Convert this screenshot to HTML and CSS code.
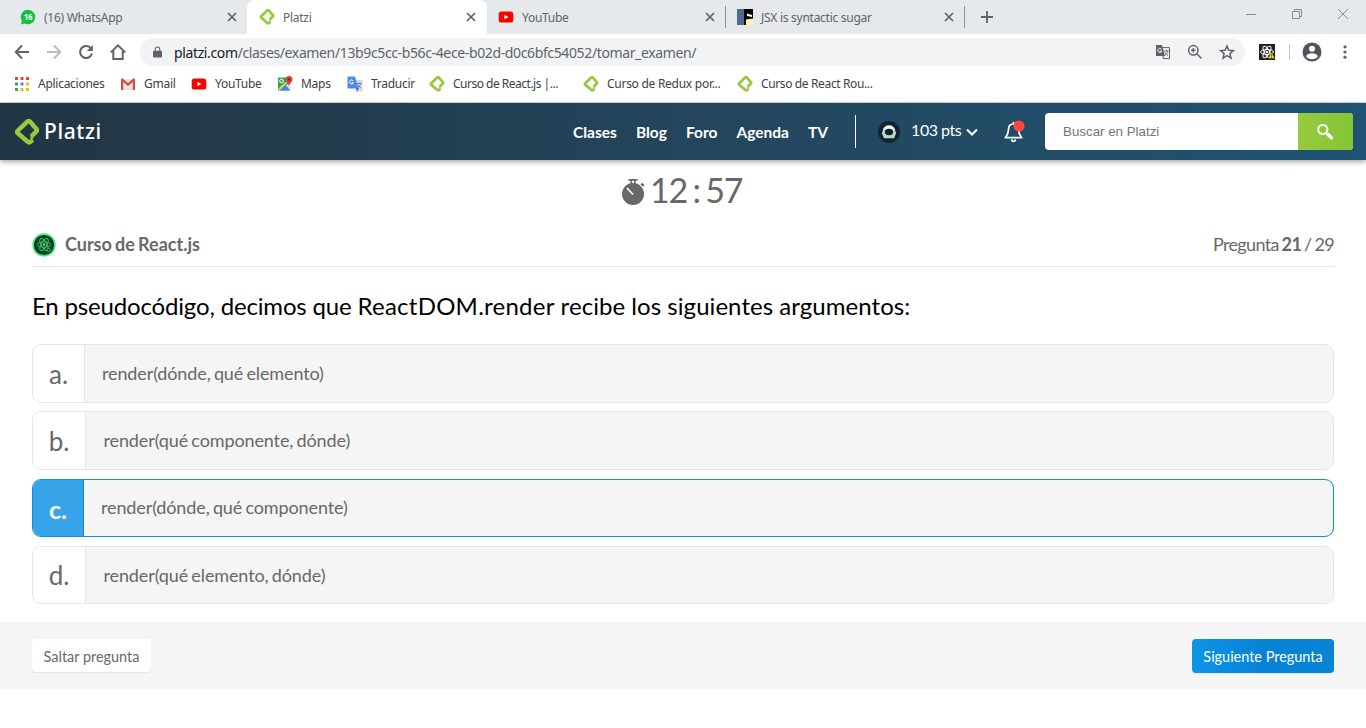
FILE: index.html
```html
<!DOCTYPE html>
<html lang="es">
<head>
<meta charset="utf-8">
<title>Platzi</title>
<link rel="stylesheet" href="styles.css">
</head>
<body>
<svg class="defs" width="0" height="0">
  <symbol id="platzi" viewBox="0 0 24 26"><path d="M17.500 20.800 15.600 22.800a2 2 0 0 1-2.900 0L2.600 14a1.600 1.600 0 0 1 0-2.200L12.300 2.600a2 2 0 0 1 2.700 0l6.400 7.300a1.700 1.700 0 0 1 0 2.400L16.300 17.500" fill="none" stroke="currentColor" stroke-width="4.500" stroke-linejoin="round"/><path d="M15.500 17.500l2.500 2.500" stroke="currentColor" stroke-width="1.800"/></symbol>
  <symbol id="close" viewBox="0 0 10 10"><path d="M1 1l8 8M9 1L1 9" stroke="#5f6368" stroke-width="1.700"/></symbol>
  <symbol id="yt" viewBox="0 0 16 16"><rect x=".7" y="2.500" width="14.600" height="11" rx="2.600" fill="#f00"/><path d="M6.400 5.700v4.600l4-2.300z" fill="#fff"/></symbol>
</svg>
<div class="tabs">
  <div class="tab first"><svg class="fav" viewBox="0 0 16 16"><path d="M8 .8a7.200 7.200 0 1 1-3.300 13.600L1 15.400l.9-3.600A7.200 7.200 0 0 1 8 .8z" fill="#12c143"/><text x="8" y="11" text-anchor="middle" class="badge">16</text></svg><span>(16) WhatsApp</span><svg class="x"><use href="#close"/></svg></div>
  <div class="tab active"><svg class="fav lime"><use href="#platzi"/></svg><span>Platzi</span><svg class="x"><use href="#close"/></svg></div>
  <div class="tab third"><svg class="fav"><use href="#yt"/></svg><span>YouTube</span><svg class="x"><use href="#close"/></svg></div>
  <div class="tab last"><svg class="fav" viewBox="0 0 16 16"><path fill="#4f6992" d="M0 0h7v16H0z"/><path d="M7 0h9v16H7z"/><path d="M10 4.500l5 1.600v2l-5-1z" fill="#fff"/><path d="M9 10.500l7-1V16H9z" fill="#fff3b0"/></svg><span>JSX is syntactic sugar</span><svg class="x"><use href="#close"/></svg></div>
  <svg class="plus" viewBox="0 0 12 12"><path d="M6 0v12M0 6h12" stroke="#5f6368" stroke-width="1.800"/></svg>
  <div class="win">
    <svg viewBox="0 0 10 10"><path d="M0 5.500h10"/></svg>
    <svg viewBox="0 0 10 10"><path d="M.5 2.500h7v7h-7zM2.500 2.500v-2h7v7h-2"/></svg>
    <svg viewBox="0 0 10 10"><path d="M0 0l10 10M10 0L0 10"/></svg>
  </div>
</div>
<div class="toolbar">
  <svg class="tb" viewBox="0 0 16 16"><path d="M15 8H2M8 1.500L1.700 8 8 14.500"/></svg>
  <svg class="tb off" viewBox="0 0 16 16"><path d="M1 8h13M8 1.500L14.300 8 8 14.500"/></svg>
  <svg class="tb" viewBox="0 0 16 16"><path d="M13 4.500A6 6 0 1 0 13.900 9.500"/><path d="M14.800 1v6H8.800z" class="fill"/></svg>
  <svg class="tb" viewBox="0 0 16 16"><path d="M.8 8.400 8 1.400l7.200 7M3.300 7v8h9.400V7"/></svg>
  <div class="omni">
    <svg class="lock" viewBox="0 0 10 12"><path d="M1 4.500h8a1 1 0 0 1 1 1V11a1 1 0 0 1-1 1H1a1 1 0 0 1-1-1V5.500a1 1 0 0 1 1-1z" fill="#5f6368"/><path d="M2.500 5V3a2.500 2.500 0 0 1 5 0v2" fill="none" stroke="#5f6368" stroke-width="1.200"/></svg>
    <span class="url"><b>platzi.com</b>/clases/examen/13b9c5cc-b56c-4ece-b02d-d0c6bfc54052/tomar_examen/</span>
    <div class="omni-icons">
      <svg viewBox="0 0 16 16"><path d="M6.500 3.600h8v11H8.300z" fill="none" stroke="#5f6368"/><path d="M1 1h6l3 11H1z" fill="#5f6368"/><path d="M6.300 5a2 2 0 1 0 .5 2H4.900" fill="none" stroke="#fff"/><path d="M9 7h4.500M11.200 6v1M12.800 7c-.4 2-1.500 3.300-3 4.500M10 8.500c.8 1.500 1.800 2.500 3 3" fill="none" stroke="#5f6368" stroke-width=".9"/></svg>
      <svg viewBox="0 0 16 16"><circle cx="6.300" cy="6.300" r="4.700" fill="none" stroke="#5f6368" stroke-width="1.500"/><path d="M9.800 9.800l4.700 4.700M6.300 4.100v4.400M4.100 6.300h4.400" stroke="#5f6368" stroke-width="1.400"/></svg>
      <svg viewBox="0 0 16 16"><path d="M8 2l1.800 4.200 4.600.4-3.500 3 1.100 4.500L8 11.700l-4 2.400 1.100-4.500-3.500-3 4.600-.4z" fill="none" stroke="#5f6368" stroke-width="1.500"/></svg>
    </div>
  </div>
  <svg class="ext" viewBox="0 0 16 16"><path d="M0 0h16v16H0z" fill="#202020"/><g fill="none" stroke="#fff" stroke-width="1"><ellipse cx="8" cy="8" rx="6.500" ry="2.500"/><ellipse cx="8" cy="8" rx="6.500" ry="2.500" transform="rotate(60 8 8)"/><ellipse cx="8" cy="8" rx="6.500" ry="2.500" transform="rotate(120 8 8)"/></g><circle cx="8" cy="8" r="1.300" fill="#fff"/><path d="M12.500 8.500L16 14.500H9z" fill="#f8e71c" stroke="#202020" stroke-width=".5"/><path d="M12.500 10.500v2M12.500 13v1" stroke="#333" stroke-width=".7"/></svg>
  <i class="tbsep"></i>
  <svg class="avatar" viewBox="0 0 20 20"><circle cx="10" cy="10" r="9.500" fill="#50555b"/><circle cx="10" cy="6.800" r="3" fill="#fff"/><path d="M4.200 14.400c0-2.100 3.800-3.200 5.800-3.200s5.800 1.100 5.800 3.200c-1.300 1.800-3.400 2.800-5.800 2.800s-4.500-1-5.800-2.800z" fill="#fff"/></svg>
  <svg class="dots" viewBox="0 0 4 16"><g fill="#5f6368"><circle cx="2" cy="2.800" r="1.600"/><circle cx="2" cy="8" r="1.600"/><circle cx="2" cy="13.200" r="1.600"/></g></svg>
</div>
<div class="bookmarks">
  <div class="bm"><svg viewBox="0 0 16 16"><path d="M1 1h3v3H1zM6.500 1h3v3h-3zM12 1h3v3h-3z" fill="#ea4335"/><path d="M1 6.500h3v3H1zM1 12h3v3H1z" fill="#34a853"/><path d="M6.500 6.500h3v3h-3z" fill="#4285f4"/><path d="M12 6.500h3v3h-3zM6.500 12h3v3h-3zM12 12h3v3h-3z" fill="#fbbc05"/></svg><span>Aplicaciones</span></div>
  <div class="bm"><svg viewBox="0 0 16 16"><path d="M2 3h12v11H2z" fill="#e8e4e4"/><path d="M1 2.500h1.500L8 7l5.500-4.500H15V14h-2.200V6L8 9.900 3.200 6v8H1z" fill="#d54b3d"/></svg><span>Gmail</span></div>
  <div class="bm"><svg><use href="#yt"/></svg><span>YouTube</span></div>
  <div class="bm"><svg viewBox="0 0 16 16"><path d="M1 1.500h11v13H1z" fill="#34a853"/><path d="M2 14.500l6-6 6 6z" fill="#4285f4"/><path d="M1 13L13 2l1 1L2.500 14.500z" fill="#f6d04d"/><path d="M9 9.500l4.500 5V6z" fill="#dcdfe3"/><circle cx="4.500" cy="5" r="1.800" fill="none" stroke="#fff"/><path d="M12 0a3.500 3.500 0 0 1 3.500 3.500C15.500 6 12.500 7 12 10.500 11.500 7 8.500 6 8.500 3.500A3.500 3.500 0 0 1 12 0z" fill="#db4437"/><circle cx="12" cy="3.500" r="1.200" fill="#7b231e"/></svg><span>Maps</span></div>
  <div class="bm"><svg viewBox="0 0 16 16"><path d="M7 4h8.500v11.500H9z" fill="#d7d9dc"/><path d="M9 12h3l-2 3.500z" fill="#3a52c4"/><path d="M.5.500h7.500l3.500 12H.5z" fill="#4a8cf5"/><path d="M6 4.700a2 2 0 1 0 .4 1.900H4.700" fill="none" stroke="#fff"/><path d="M10 7.500h4.500M12.300 6.500v1M13.700 7.500c-.5 2-1.500 3-2.500 3.800M11 9c.8 1.500 1.800 2.300 3 2.800" fill="none" stroke="#5d7285" stroke-width=".8"/></svg><span>Traducir</span></div>
  <div class="bm tight"><svg class="lime"><use href="#platzi"/></svg><span>Curso de React.js |...</span></div>
  <div class="bm"><svg class="lime"><use href="#platzi"/></svg><span>Curso de Redux por...</span></div>
  <div class="bm snug"><svg class="lime"><use href="#platzi"/></svg><span>Curso de React Rou...</span></div>
</div>
<header class="header">
  <svg class="logo lime"><use href="#platzi"/></svg><span class="brand">Platzi</span>
  <nav class="nav"><a>Clases</a><a>Blog</a><a>Foro</a><a>Agenda</a><a>TV</a></nav>
  <div class="user">
    <svg class="astro" viewBox="0 0 22 22"><circle cx="11" cy="11" r="11" fill="#122234"/><path d="M4.500 10.500a6.500 6.500 0 0 1 13 0l.7 1.500-1 2.500-1.200 2.700H6l-1.200-2.700-1-2.500z" fill="#b9d6c6"/><path d="M5.500 8a6 5 0 0 1 11 0L15 9H7z" fill="#f7f5e8"/><ellipse cx="11" cy="11" rx="4.100" ry="3.300" fill="#122234"/></svg>
    <span class="pts">103 pts</span>
    <svg class="chev" viewBox="0 0 12 8"><path d="M1 1.500l5 5 5-5" fill="none" stroke="#fff" stroke-width="2"/></svg>
  </div>
  <svg class="bell" viewBox="0 0 21 23"><path d="M9.500 4C6 4 4.500 6.500 4.500 9.500c0 4-1.500 5.800-3.200 8.200h16.400c-1.700-2.400-3.200-4.200-3.200-8.200 0-3-1.500-5.500-5-5.500zM9.500 4V2.500M7.700 20c.5 1.800 3.100 1.800 3.600 0" fill="none" stroke="#fff" stroke-width="1.700" stroke-linejoin="round" stroke-linecap="round"/><circle cx="15" cy="6" r="5.600" fill="#ff4642"/></svg>
  <div class="search"><span class="ph">Buscar en Platzi</span><div class="go"><svg viewBox="0 0 16 16"><circle cx="5.800" cy="5.500" r="4.600" fill="none" stroke="#fff" stroke-width="2"/><path d="M9 9l1.500 1.500" stroke="#fff" stroke-width="2"/><path d="M11 10.500l3.300 3.300" stroke="#fff" stroke-width="3.500" stroke-linecap="round"/></svg></div></div>
</header>
<main>
  <div class="timer"><svg viewBox="0 0 23 26"><circle cx="11" cy="15" r="11" fill="#686868"/><path d="M6.500 0h9v1.700h-9zM8.500 1.700h1.600V5H8.500zM12 1.700h1.600V5H12zM18.500 5.500l1.500-1.800 2.500 2.200-1.500 1.800z" fill="#686868"/><path d="M5 9l6 6.500" stroke="#fff" stroke-width="1.700"/></svg><span>12 : 57</span></div>
  <div class="course">
    <svg viewBox="0 0 24 24"><circle cx="12" cy="12" r="10.900" fill="#06401f" stroke="#4fe58a" stroke-width="1.600"/><g fill="none" stroke="#3fbf70" stroke-width="1"><ellipse cx="12" cy="11.500" rx="6.700" ry="2.700"/><ellipse cx="12" cy="11.500" rx="6.700" ry="2.700" transform="rotate(60 12 11.500)"/><ellipse cx="12" cy="11.500" rx="6.700" ry="2.700" transform="rotate(120 12 11.500)"/><circle cx="16.500" cy="17" r="1.700" fill="#06401f"/></g><circle cx="12" cy="11.500" r="1.200" fill="#4fe58a"/></svg>
    <span class="name">Curso de React.js</span>
    <span class="count">Pregunta <b>21</b> / 29</span>
  </div>
  <h1><span class="lead">En pseudocódigo, decimos que </span><span class="code">ReactDOM.render </span><span class="rest">recibe los siguientes argumentos:</span></h1>
  <div class="opts">
    <div class="opt low"><span class="k">a.</span><span class="v">render(dónde, qué elemento)</span></div>
    <div class="opt wide"><span class="k">b.</span><span class="v up">render(qué componente, dónde)</span></div>
    <div class="opt sel low"><span class="k">c.</span><span class="v up">render(dónde, qué componente)</span></div>
    <div class="opt wide"><span class="k">d.</span><span class="v">render(qué elemento, dónde)</span></div>
  </div>
</main>
<footer><a class="skip">Saltar pregunta</a><a class="next">Siguiente Pregunta</a></footer>
</body>
</html>
```
FILE: styles.css
```css
* { box-sizing: border-box; }
body { margin: 0; height: 728px; overflow: hidden; background: #fff; font-family: Lato, sans-serif; color: #686868; }
svg { display: block; flex: none; }
.defs { position: absolute; }
.lime { color: #98ca3f; }

/* Browser window */
.tabs, .toolbar, .bookmarks { font-family: "Noto Sans", sans-serif; font-size: 12px; letter-spacing: -.27px; }
.tabs { display: flex; height: 34px; background: #e5e9ec; color: #5f6368; }
.tab { display: flex; align-items: center; width: 239px; padding: 0 10px 0 11px; }
.tab.first { width: 247px; padding-left: 20px; border-bottom-right-radius: 8px; }
.tab.active { width: 240px; padding: 0 11px 0 12px; background: #fff; border-radius: 8px 8px 0 0; }
.tab.third { width: 238px; }
.tab.last { width: 240px; border: solid #8e9296; border-width: 0 1px; border-image: linear-gradient(transparent 7px, #8e9296 7px 27px, transparent 27px) 1; }
.fav { width: 16px; height: 16px; margin-right: 8px; }
.badge { font: bold 8px "Noto Sans", sans-serif; fill: #fff; letter-spacing: -.3px; }
.x { width: 10px; height: 10px; margin-left: auto; }
.plus { width: 12px; height: 12px; margin: 11px 0 0 16px; }
.win { display: flex; gap: 36px; margin: 9px 18px 0 auto; }
.win svg { width: 10px; height: 10px; fill: none; stroke: #8a8d90; }
.toolbar { display: flex; align-items: center; height: 36px; padding-left: 14px; }
.tb { width: 16px; height: 16px; margin-right: 16px; fill: none; stroke: #5f6368; stroke-width: 2; }
.tb .fill { fill: #5f6368; stroke: none; }
.off { stroke: #babcbe; }
.omni { display: flex; align-items: center; width: 1105px; height: 28px; margin-left: -2px; padding: 0 10px 0 13px; border-radius: 14px; background: #f1f3f4; }
.lock { width: 9px; height: 12px; }
.url { margin-left: 12px; font-size: 14px; letter-spacing: -.37px; color: #5f6368; }
.url b { font-weight: 400; color: #202124; }
.omni-icons { display: flex; gap: 16px; margin-left: auto; }
.omni-icons svg { width: 16px; height: 16px; }
.ext { width: 16px; height: 16px; margin-left: 14px; }
.tbsep { width: 1px; height: 16px; margin: 0 12px 0 14px; background: #c5c8cb; }
.avatar { width: 20px; height: 20px; }
.dots { width: 4px; height: 16px; margin-left: 21px; }
.bookmarks { display: grid; grid-template-columns: 106px 71px 86px 70px 82px 154px 154px 140px; height: 33px; padding: 0 0 5px 14px; border-bottom: 1px solid #d3d5da; color: #3c4043; }
.bm { display: flex; align-items: center; gap: 8px; white-space: nowrap; }
.bm svg { width: 16px; height: 16px; }
.tight { letter-spacing: -.5px; }
.snug { letter-spacing: -.37px; }

/* Site header */
.header { display: flex; align-items: center; height: 57px; padding: 0 13px 0 15px; background: linear-gradient(90deg, #213543, #24455b 50%, #1f5373); color: #fff; box-shadow: 0 2px 5px rgba(0,0,0,.35); }
.logo { width: 24px; height: 26px; }
.brand { width: 57px; margin-left: 5px; padding-bottom: 1px; font: 500 21px "Noto Sans", sans-serif; letter-spacing: .6px; }
.nav { display: flex; width: 255px; justify-content: space-between; margin-left: 472px; font-weight: 700; font-size: 15.5px; }
.user { display: flex; align-items: center; height: 33px; margin-left: 27px; padding-left: 22px; border-left: 1px solid #fff; }
.astro { width: 22px; height: 22px; }
.pts { width: 51px; margin-left: 11px; padding-bottom: 5px; font-size: 16px; letter-spacing: -.4px; word-spacing: -.4px; white-space: nowrap; }
.chev { width: 12px; height: 8px; margin-left: 4px; }
.bell { width: 21px; height: 23px; margin-left: 26px; }
.search { display: flex; align-items: center; width: 308px; height: 37px; margin-left: auto; border-radius: 4px; overflow: hidden; background: #fff; }
.ph { padding-left: 18px; font: 13.33px "Liberation Sans", sans-serif; color: #757575; }
.go { display: grid; place-items: center; width: 55px; height: 37px; margin-left: auto; padding-right: 2px; background: linear-gradient(90deg, #98ca3f, #83c634); }
.go svg { width: 16px; height: 16px; }

/* Exam */
main { height: 462px; padding: 0 32px; }
.timer { display: flex; align-items: center; height: 62px; padding-left: 590px; font-size: 34px; gap: 5px; letter-spacing: -1.3px; word-spacing: -1.8px; }
.timer svg { width: 23px; height: 26px; margin-top: 1px; }
.timer span { margin-top: -3px; }
.course { display: flex; align-items: center; height: 45px; border-bottom: 1px solid #e6e6e6; font-size: 18px; }
.course svg { width: 24px; height: 24px; margin-top: 1px; }
.name { margin-left: 9px; font-weight: 700; word-spacing: -1.2px; }
.count { margin-left: auto; letter-spacing: -.65px; word-spacing: -1.1px; }
h1 { margin: 0; height: 77px; line-height: 78px; font-size: 24px; font-weight: 400; color: #000; white-space: pre; }
.lead { letter-spacing: -.17px; }
.code { letter-spacing: .25px; }
.rest { letter-spacing: .05px; }
.opts { display: grid; gap: 8.5px; }
.opt { display: flex; height: 58.8px; border: 1px solid #e6e6e6; border-radius: 9px; overflow: hidden; background: #f5f5f5; }
.opt:last-child { height: 58px; }
.k { display: grid; place-items: center; width: 52px; border-right: 1px solid #e6e6e6; background: #fff; font-size: 26px; }
.v { display: flex; align-items: center; padding-left: 17px; font-size: 18px; letter-spacing: -.12px; word-spacing: -1.2px; }
.low .k { padding-top: 2px; }
.up { padding-bottom: 2px; }
.wide .k { width: 53px; }
.wide .v { padding-left: 17.5px; }
.sel { border-color: #0f8dde; }
.sel .k { width: 51px; background: #37a4ea; border-color: #0f8dde; color: #fff; font-weight: 700; font-size: 25px; }
footer { display: flex; justify-content: space-between; height: 67px; padding: 17px 32px; background: #f5f5f5; font-size: 14.45px; }
footer a { display: grid; place-items: center; height: 33px; padding-top: 2px; border-radius: 4px; box-shadow: 0 1px 1px rgba(0,0,0,.06); }
.skip { width: 119px; background: #fff; }
.next { width: 142px; background: linear-gradient(90deg, #0c94e7, #0783d6 50%); color: #fff; }
footer .next { height: 34px; padding-top: 1px; }
```
